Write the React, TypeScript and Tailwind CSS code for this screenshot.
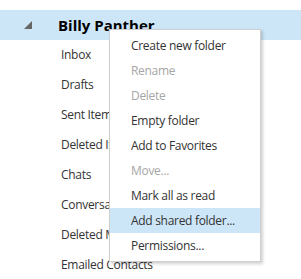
import React from 'react';

const folders = [
  'Inbox',
  'Drafts',
  'Sent Items',
  'Deleted Items',
  'Chats',
  'Conversation History',
  'Deleted Messages',
  'Emailed Contacts',
];

const menuItems = [
  { label: 'Create new folder' },
  { label: 'Rename', disabled: true },
  { label: 'Delete', disabled: true },
  { label: 'Empty folder' },
  { label: 'Add to Favorites' },
  { label: 'Move...', disabled: true },
  { label: 'Mark all as read' },
  { label: 'Add shared folder...', active: true },
  { label: 'Permissions...' },
];

export default function App() {
  return (
    <div
      className="relative w-[301px] h-[279px] overflow-hidden bg-white tracking-[-0.3px]"
      style={{ fontFamily: '"Open Sans", "Noto Sans", sans-serif' }}
    >
      {/* folder tree */}
      <div className="pt-[10px]">
        <div className="flex h-[30px] items-center bg-[#cde6f7]">
          <svg width="8" height="8" viewBox="0 0 8 8" className="ml-[24px]">
            <polygon points="8,0 8,8 0,8" fill="#666" />
          </svg>
          <span className="ml-[26px] text-[15px] font-bold tracking-normal text-black">Billy Panther</span>
        </div>
        {folders.map((f) => (
          <div key={f} className="flex h-[30px] items-center pl-[61px] text-[12px] text-[#333]">
            {f}
          </div>
        ))}
      </div>

      {/* context menu, sits over the tree */}
      <div className="absolute left-[109px] top-[29px] w-[152px] border border-[#cfcfcf] bg-white py-[3px] shadow-[2px_2px_3px_rgba(0,0,0,0.18)]">
        {menuItems.map((m) => (
          <div
            key={m.label}
            className={`flex h-[25px] items-center pl-[21px] text-[12px] ${
              m.active ? 'bg-[#cde6f7]' : ''
            } ${m.disabled ? 'text-[#a6a6a6]' : 'text-[#333]'}`}
          >
            {m.label}
          </div>
        ))}
      </div>
    </div>
  );
}
